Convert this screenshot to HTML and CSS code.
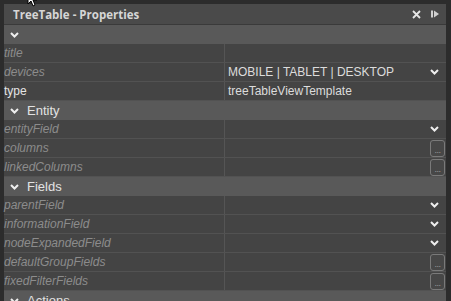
FILE: index.html
```html
<!DOCTYPE html>
<html lang="en">
<head>
    <meta charset="UTF-8">
    <title>TreeTable - Properties</title>
    <link rel="stylesheet" href="styles.css">
</head>
<body>
    <div class="panel">
        <div class="titlebar">
            <span class="title">TreeTable - Properties</span>
            <span class="tools">
                <svg class="close" width="9" height="9" viewBox="0 0 9 9">
                    <path d="M1 1 L8 8 M8 1 L1 8" stroke="#e6e6e6" stroke-width="1.8"/>
                </svg>
                <svg class="dock" width="8" height="8" viewBox="0 0 8 8">
                    <rect x="0" y="0.5" width="2" height="7" fill="#d0d0d0"/>
                    <path d="M3 0.5 L8 4 L3 7.5 Z" fill="#d0d0d0"/>
                </svg>
            </span>
        </div>

        <div class="section top"><svg class="chev" width="9" height="6" viewBox="0 0 9 6"><path d="M1 1 L4.5 4.5 L8 1" fill="none" stroke="#eee" stroke-width="2"/></svg></div>

        <div class="row"><div class="key">title</div><div class="val"></div></div>
        <div class="row"><div class="key">devices</div><div class="val">MOBILE | TABLET | DESKTOP<svg class="chev" width="9" height="6" viewBox="0 0 9 6"><path d="M1 1 L4.5 4.5 L8 1" fill="none" stroke="#eee" stroke-width="2"/></svg></div></div>
        <div class="row"><div class="key set">type</div><div class="val">treeTableViewTemplate</div></div>

        <div class="section"><svg class="chev" width="9" height="6" viewBox="0 0 9 6"><path d="M1 1 L4.5 4.5 L8 1" fill="none" stroke="#eee" stroke-width="2"/></svg>Entity</div>
        <div class="row"><div class="key">entityField</div><div class="val"><svg class="chev" width="9" height="6" viewBox="0 0 9 6"><path d="M1 1 L4.5 4.5 L8 1" fill="none" stroke="#eee" stroke-width="2"/></svg></div></div>
        <div class="row"><div class="key">columns</div><div class="val"><span class="more">...</span></div></div>
        <div class="row"><div class="key">linkedColumns</div><div class="val"><span class="more">...</span></div></div>

        <div class="section"><svg class="chev" width="9" height="6" viewBox="0 0 9 6"><path d="M1 1 L4.5 4.5 L8 1" fill="none" stroke="#eee" stroke-width="2"/></svg>Fields</div>
        <div class="row"><div class="key">parentField</div><div class="val"><svg class="chev" width="9" height="6" viewBox="0 0 9 6"><path d="M1 1 L4.5 4.5 L8 1" fill="none" stroke="#eee" stroke-width="2"/></svg></div></div>
        <div class="row"><div class="key">informationField</div><div class="val"><svg class="chev" width="9" height="6" viewBox="0 0 9 6"><path d="M1 1 L4.5 4.5 L8 1" fill="none" stroke="#eee" stroke-width="2"/></svg></div></div>
        <div class="row"><div class="key">nodeExpandedField</div><div class="val"><svg class="chev" width="9" height="6" viewBox="0 0 9 6"><path d="M1 1 L4.5 4.5 L8 1" fill="none" stroke="#eee" stroke-width="2"/></svg></div></div>
        <div class="row"><div class="key">defaultGroupFields</div><div class="val"><span class="more">...</span></div></div>
        <div class="row"><div class="key">fixedFilterFields</div><div class="val"><span class="more">...</span></div></div>

        <div class="section"><svg class="chev" width="9" height="6" viewBox="0 0 9 6"><path d="M1 1 L4.5 4.5 L8 1" fill="none" stroke="#eee" stroke-width="2"/></svg>Actions</div>
    </div>

    <svg class="cursor" width="12" height="8" viewBox="0 0 12 8">
        <path d="M1 -8 L1 4 L4 1 L6 6 L8 5 L6 0 L10 0 Z" fill="#fff" stroke="#000" stroke-width="1"/>
    </svg>
</body>
</html>
```

FILE: styles.css
```css
* {
    box-sizing: border-box;
}

body {
    margin: 0;
    background-color: #2c2c2c;
    font-family: "Liberation Sans", Arial, sans-serif;
    font-size: 12px;
    color: #dcdcdc;
    height: 301px;
    overflow: hidden;
}

.panel {
    margin: 4px 5px 0 4px;
    background-color: #444;
}

.titlebar {
    height: 21px;
    background-color: #4a4a4a;
    border-bottom: 1px solid #3a3a3a;
    display: flex;
    align-items: center;
    justify-content: space-between;
    padding: 0 7px 0 9px;
}

.title {
    font-family: "Open Sans", sans-serif;
    font-weight: 700;
    font-size: 11.5px;
    color: #d6d6d6;
}

.tools {
    display: flex;
    align-items: center;
    gap: 10px;
}

.section {
    height: 19px;
    background-color: #595959;
    display: flex;
    align-items: center;
    padding-left: 6px;
    font-size: 13px;
    color: #e2e2e2;
}

.section .chev {
    margin-right: 8px;
}

.row {
    height: 19px;
    display: grid;
    grid-template-columns: 221px 1fr;
    border-bottom: 1px solid #525252;
}

.key {
    font-style: italic;
    color: #8c8c8c;
    line-height: 18px;
    border-right: 1px solid #555;
}

.key.set {
    font-style: normal;
    color: #e4e4e4;
}

.val {
    line-height: 18px;
    padding-left: 3px;
    display: flex;
    align-items: center;
}

.val .chev {
    margin-left: auto;
    margin-right: 7px;
}

.more {
    margin-left: auto;
    margin-right: 1px;
    width: 15px;
    height: 17px;
    border: 1px solid #7a7a7a;
    border-radius: 3px;
    background-color: #474747;
    color: #9a9a9a;
    font-size: 9px;
    line-height: 18px;
    text-align: center;
    letter-spacing: -0.5px;
}

.cursor {
    position: absolute;
    left: 27px;
    top: 0;
}
```
